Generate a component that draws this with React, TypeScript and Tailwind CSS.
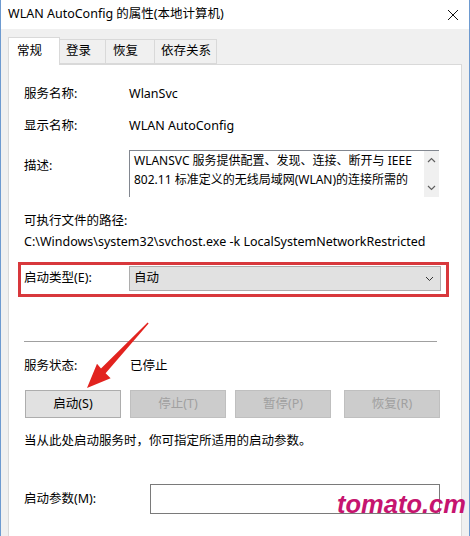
import React from "react";

const F = "font-['Noto_Sans','Noto_Sans_CJK_SC',sans-serif]";

function Btn({ label, enabled, className = "" }: { label: string; enabled?: boolean; className?: string }) {
  return (
    <div
      className={
        "w-[96px] h-[28px] flex items-center justify-center border text-[12.5px] " +
        (enabled ? "bg-[#e1e1e1] border-[#adadad] text-black " : "bg-[#cccccc] border-[#bfbfbf] text-[#a0a0a0] ") +
        className
      }
    >
      {label}
    </div>
  );
}

export default function App() {
  return (
    <div className={"w-[470px] h-[536px] relative overflow-hidden bg-[#f0f0f0] border-x border-[#6d9ad0] flex flex-col " + F}>
      {/* title bar */}
      <div className="h-[29px] bg-white flex items-center justify-between pl-[7px] pr-[9px] shrink-0">
        <span className="text-[12.5px] text-black leading-none">WLAN AutoConfig 的属性(本地计算机)</span>
        <svg width="12" height="12" viewBox="0 0 12 12" className="mr-[1px]">
          <path d="M1 1L11 11M11 1L1 11" stroke="#111" strokeWidth="1" fill="none" />
        </svg>
      </div>

      <div className="flex-1 flex flex-col pl-[7px] pr-[7px] pt-[7px]">
        {/* tabs */}
        <div className="flex items-end h-[28px] relative z-10 text-[12.5px]">
          <div className="w-[52px] h-[28px] bg-white border border-b-0 border-[#d9d9d9] flex items-center pl-[8px] -mb-[1px]">常规</div>
          <div className="w-[46px] h-[25px] border border-l-0 border-[#d9d9d9] flex items-center pl-[6px]">登录</div>
          <div className="w-[49px] h-[25px] border border-l-0 border-[#d9d9d9] flex items-center pl-[7px]">恢复</div>
          <div className="w-[62px] h-[25px] border border-l-0 border-[#d9d9d9] flex items-center pl-[6px]">依存关系</div>
        </div>

        {/* panel */}
        <div className="flex-1 bg-white border border-[#d9d9d9] border-b-0 pl-[15px] pr-[20px] flex flex-col text-[12.5px] text-black">
          <div className="flex h-[20px] items-center mt-[19px]">
            <span className="w-[105px]">服务名称:</span>
            <span>WlanSvc</span>
          </div>
          <div className="flex h-[20px] items-center mt-[12px]">
            <span className="w-[105px]">显示名称:</span>
            <span>WLAN AutoConfig</span>
          </div>
          <div className="flex mt-[14px]">
            <span className="w-[105px] h-[20px] flex items-center mt-[6px]">描述:</span>
            <div className="w-[310px] h-[47px] border-t border-l border-[#828790] flex">
              <div className="flex-1 pl-[4px] pt-[0px] leading-[19px] whitespace-nowrap overflow-hidden text-[12px]">
                <div>WLANSVC 服务提供配置、发现、连接、断开与 IEEE</div>
                <div>802.11 标准定义的无线局域网(WLAN)的连接所需的</div>
              </div>
              <div className="w-[15px] shrink-0 bg-[#f0f0f0] flex flex-col justify-between items-center py-[6px]">
                <svg width="9" height="6" viewBox="0 0 9 6">
                  <path d="M1 5L4.5 1.5L8 5" stroke="#606060" strokeWidth="1.2" fill="none" />
                </svg>
                <svg width="9" height="6" viewBox="0 0 9 6">
                  <path d="M1 1L4.5 4.5L8 1" stroke="#606060" strokeWidth="1.2" fill="none" />
                </svg>
              </div>
            </div>
          </div>
          <div className="h-[20px] flex items-center mt-[14px]">可执行文件的路径:</div>
          <div className="h-[20px] flex items-center mt-[1px] whitespace-nowrap">C:\Windows\system32\svchost.exe -k LocalSystemNetworkRestricted</div>

          {/* red highlight row */}
          <div className="-ml-[6px] w-[431px] h-[35px] border-[3px] border-[#d8383c] mt-[10px] flex items-start pt-[1px] pl-[3px]">
            <span className="w-[105px] h-[25px] flex items-center">启动类型(E):</span>
            <div className="w-[312px] h-[25px] bg-[#e1e1e1] border border-[#adadad] flex items-center justify-between pl-[4px] pr-[6px]">
              <span>自动</span>
              <svg width="9" height="6" viewBox="0 0 9 6">
                <path d="M1 1L4.5 4.5L8 1" stroke="#333" strokeWidth="1" fill="none" />
              </svg>
            </div>
          </div>

          <div className="w-[413px] border-t border-[#a0a0a0] mt-[44px]" />

          <div className="flex h-[20px] items-center mt-[14px]">
            <span className="w-[106px]">服务状态:</span>
            <span>已停止</span>
          </div>

          <div className="flex mt-[14px] ml-[1px]">
            <Btn label="启动(S)" enabled />
            <Btn label="停止(T)" className="ml-[9px]" />
            <Btn label="暂停(P)" className="ml-[9px]" />
            <Btn label="恢复(R)" className="ml-[13px]" />
          </div>

          <div className="h-[20px] flex items-center mt-[13px]">当从此处启动服务时，你可指定所适用的启动参数。</div>

          <div className="flex items-center mt-[33px]">
            <span className="w-[126px]">启动参数(M):</span>
            <div className="w-[290px] h-[30px] border border-[#7a7a7a] bg-white" />
          </div>
        </div>
      </div>

      {/* red annotation arrow */}
      <svg className="absolute left-0 top-0 pointer-events-none" width="470" height="536" viewBox="0 0 470 536">
        <polygon
          points="147.6,323.4 104.6,373.2 109.6,378.2 86,388 96,363.8 100,368.4 146.6,322.6"
          fill="#e2231f"
        />
      </svg>

      {/* watermark */}
      <div className="absolute left-[336px] top-[492px] text-[25.5px] font-bold italic text-[#c6146f] font-['Liberation_Sans',Arial,sans-serif] leading-none">
        tomato.cm
      </div>
    </div>
  );
}
